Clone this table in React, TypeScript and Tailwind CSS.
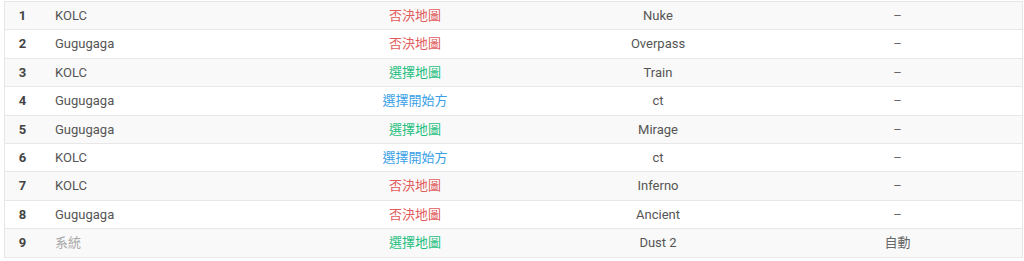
type Row = {
  n: number;
  team: string;
  action: "ban" | "pick" | "side";
  map: string;
  note: string;
};

const rows: Row[] = [
  { n: 1, team: "KOLC", action: "ban", map: "Nuke", note: "–" },
  { n: 2, team: "Gugugaga", action: "ban", map: "Overpass", note: "–" },
  { n: 3, team: "KOLC", action: "pick", map: "Train", note: "–" },
  { n: 4, team: "Gugugaga", action: "side", map: "ct", note: "–" },
  { n: 5, team: "Gugugaga", action: "pick", map: "Mirage", note: "–" },
  { n: 6, team: "KOLC", action: "side", map: "ct", note: "–" },
  { n: 7, team: "KOLC", action: "ban", map: "Inferno", note: "–" },
  { n: 8, team: "Gugugaga", action: "ban", map: "Ancient", note: "–" },
  { n: 9, team: "系統", action: "pick", map: "Dust 2", note: "自動" },
];

function actionLabel(a: Row["action"]) {
  if (a === "ban") return <span className="text-[#e25b5b]">否決地圖</span>;
  if (a === "pick") return <span className="text-[#1fbf7f]">選擇地圖</span>;
  return <span className="text-[#3a9fe6]">選擇開始方</span>;
}

export default function App() {
  return (
    <div
      className="w-[1024px] h-[261px] bg-white pt-px"
      style={{ fontFamily: 'Roboto, "Noto Sans CJK TC", sans-serif' }}
    >
      <div className="ml-[4px] w-[1019px] border-x border-t border-[#e6e6e6]">
        {rows.map((r) => (
          <div
            key={r.n}
            className={`grid h-[28.4px] grid-cols-[35px_246px_258px_228px_1fr] items-center border-b border-[#e8e8e8] text-[13px] ${
              r.n % 2 === 1 ? "bg-[#f9f9f9]" : "bg-white"
            }`}
          >
            <span className="text-center font-bold text-[#444]">{r.n}</span>
            <span className={`pl-[15px] ${r.team === "系統" ? "text-[#aaaaaa]" : "text-[#555]"}`}>
              {r.team}
            </span>
            <span className="text-center">{actionLabel(r.action)}</span>
            <span className="text-center text-[#555]">{r.map}</span>
            <span className="pl-px text-center text-[#666]">{r.note}</span>
          </div>
        ))}
      </div>
    </div>
  );
}
